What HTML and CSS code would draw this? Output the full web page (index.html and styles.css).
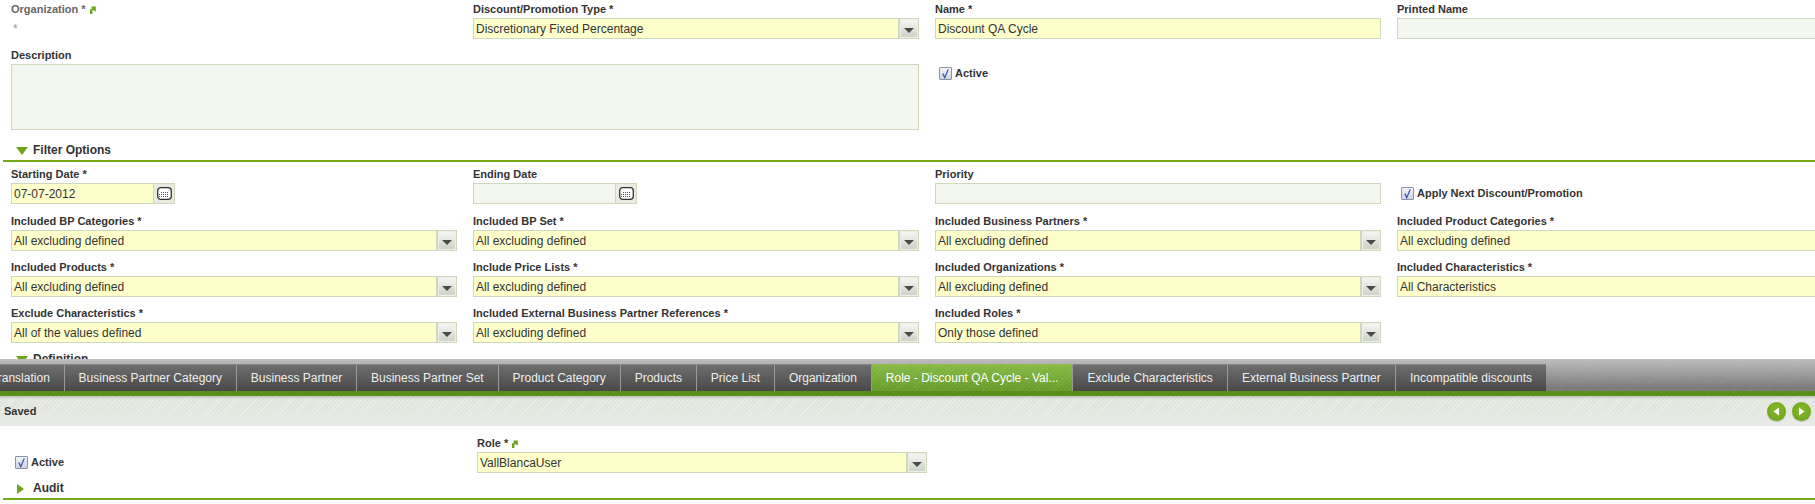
FILE: index.html
```html
<!DOCTYPE html>
<html lang="en">
<head>
<meta charset="utf-8">
<title>Discount/Promotion</title>
<link rel="stylesheet" href="styles.css">
</head>
<body>
<div class="page">
  <section class="form-top">
    <div class="grid row-first">
      <div class="field">
        <label class="lbl muted">Organization * <svg class="jump" viewBox="0 0 7 8"><path d="M1 8V4.200C1 3.400 1.600 3 2.400 3H3L2.200 .6H6.800V5.400L4.800 4.600V4.200H3.400V8Z"/></svg></label>
        <div class="readonly">*</div>
      </div>
      <div class="field">
        <label class="lbl">Discount/Promotion Type *</label>
        <div class="combo req"><span class="val">Discretionary Fixed Percentage</span><span class="drop"><i></i></span></div>
      </div>
      <div class="field">
        <label class="lbl">Name *</label>
        <div class="input req">Discount QA Cycle</div>
      </div>
      <div class="field">
        <label class="lbl">Printed Name</label>
        <div class="input opt"></div>
      </div>
    </div>
    <div class="grid row-desc">
      <div class="field span2">
        <label class="lbl">Description</label>
        <div class="textarea"></div>
      </div>
      <div class="check-cell">
        <span class="chk"><svg viewBox="0 0 12 12"><path d="M3 6 5.200 10.500 9 1.500"/></svg></span><span class="chk-lbl">Active</span>
      </div>
    </div>
    <header class="section"><i class="tri-down"></i><h2>Filter Options</h2></header>
    <div class="grid row-dates">
      <div class="field">
        <label class="lbl">Starting Date *</label>
        <div class="date"><div class="input req date-in">07-07-2012</div><span class="cal"><svg viewBox="0 0 15 13"><rect x=".7" y=".7" width="13.600" height="11.600" rx="3"/><path class="dots" d="M4 5.500H12M2 7.500H12M2 9.500H12"/></svg></span></div>
      </div>
      <div class="field">
        <label class="lbl">Ending Date</label>
        <div class="date"><div class="input opt date-in"></div><span class="cal"><svg viewBox="0 0 15 13"><rect x=".7" y=".7" width="13.600" height="11.600" rx="3"/><path class="dots" d="M4 5.500H12M2 7.500H12M2 9.500H12"/></svg></span></div>
      </div>
      <div class="field">
        <label class="lbl">Priority</label>
        <div class="input opt"></div>
      </div>
      <div class="check-cell apply">
        <span class="chk"><svg viewBox="0 0 12 12"><path d="M3 6 5.200 10.500 9 1.500"/></svg></span><span class="chk-lbl">Apply Next Discount/Promotion</span>
      </div>
    </div>
    <div class="grid row-combo">
      <div class="field"><label class="lbl">Included BP Categories *</label><div class="combo req"><span class="val">All excluding defined</span><span class="drop"><i></i></span></div></div>
      <div class="field"><label class="lbl">Included BP Set *</label><div class="combo req"><span class="val">All excluding defined</span><span class="drop"><i></i></span></div></div>
      <div class="field"><label class="lbl">Included Business Partners *</label><div class="combo req"><span class="val">All excluding defined</span><span class="drop"><i></i></span></div></div>
      <div class="field"><label class="lbl">Included Product Categories *</label><div class="combo req"><span class="val">All excluding defined</span><span class="drop"><i></i></span></div></div>
    </div>
    <div class="grid row-combo">
      <div class="field"><label class="lbl">Included Products *</label><div class="combo req"><span class="val">All excluding defined</span><span class="drop"><i></i></span></div></div>
      <div class="field"><label class="lbl">Include Price Lists *</label><div class="combo req"><span class="val">All excluding defined</span><span class="drop"><i></i></span></div></div>
      <div class="field"><label class="lbl">Included Organizations *</label><div class="combo req"><span class="val">All excluding defined</span><span class="drop"><i></i></span></div></div>
      <div class="field"><label class="lbl">Included Characteristics *</label><div class="combo req"><span class="val">All Characteristics</span><span class="drop"><i></i></span></div></div>
    </div>
    <div class="grid row-combo">
      <div class="field"><label class="lbl">Exclude Characteristics *</label><div class="combo req"><span class="val">All of the values defined</span><span class="drop"><i></i></span></div></div>
      <div class="field"><label class="lbl">Included External Business Partner References *</label><div class="combo req"><span class="val">All excluding defined</span><span class="drop"><i></i></span></div></div>
      <div class="field"><label class="lbl">Included Roles *</label><div class="combo req"><span class="val">Only those defined</span><span class="drop"><i></i></span></div></div>
    </div>
    <header class="section def"><i class="tri-down"></i><h2>Definition</h2></header>
  </section>

  <nav class="tabbar">
    <a class="tab first">Translation</a>
    <a class="tab">Business Partner Category</a>
    <a class="tab">Business Partner</a>
    <a class="tab">Business Partner Set</a>
    <a class="tab">Product Category</a>
    <a class="tab">Products</a>
    <a class="tab">Price List</a>
    <a class="tab">Organization</a>
    <a class="tab active">Role - Discount QA Cycle - Val...</a>
    <a class="tab">Exclude Characteristics</a>
    <a class="tab">External Business Partner</a>
    <a class="tab">Incompatible discounts</a>
  </nav>
  <div class="status">
    <strong>Saved</strong>
    <div class="pager">
      <span class="round"><svg viewBox="0 0 19 19"><path d="M12 5.500 6.500 9.500 12 13.500Z"/></svg></span>
      <span class="round"><svg viewBox="0 0 19 19"><path d="M7 5.500 12.500 9.500 7 13.500Z"/></svg></span>
    </div>
  </div>
  <section class="form-bottom">
    <div class="role-row">
      <div class="check-cell role-active">
        <span class="chk"><svg viewBox="0 0 12 12"><path d="M3 6 5.200 10.500 9 1.500"/></svg></span><span class="chk-lbl">Active</span>
      </div>
      <div class="field role-field">
        <label class="lbl">Role * <svg class="jump" viewBox="0 0 7 8"><path d="M1 8V4.200C1 3.400 1.600 3 2.400 3H3L2.200 .6H6.800V5.400L4.800 4.600V4.200H3.400V8Z"/></svg></label>
        <div class="combo req"><span class="val">VallBlancaUser</span><span class="drop"><i></i></span></div>
      </div>
    </div>
    <header class="section"><i class="tri-right"></i><h2>Audit</h2></header>
  </section>
</div>
</body>
</html>
```
FILE: styles.css
```css
* { box-sizing: border-box; }
html, body { margin: 0; padding: 0; background: #fff; }
body { font-family: "Liberation Sans", Arial, sans-serif; color: #333; overflow: hidden; }
.page { width: 1815px; height: 504px; overflow: hidden; }

.form-top { height: 359px; overflow: hidden; }
.grid { display: grid; grid-template-columns: repeat(4, 446px); column-gap: 16px; padding-left: 11px; width: 1900px; }
.field { display: flex; flex-direction: column; min-width: 0; }
.span2 { grid-column: span 2; }
.lbl { font-size: 11px; font-weight: 700; line-height: 13px; height: 17px; padding-top: 2px; color: #333; white-space: nowrap; }
.lbl.muted { color: #666; }
.jump { width: 7px; height: 8px; fill: #6fa51c; vertical-align: -1px; }

.row-first { height: 47px; padding-top: 1px; }
.readonly { font-size: 12px; color: #999; padding-left: 2px; padding-top: 1px; line-height: 21px; height: 21px; }
.input, .combo { height: 21px; border: 1px solid #cdd8bd; font-size: 12px; line-height: 20px; color: #333; }
.input { padding-left: 2px; }
.req { background: #ffffcc; }
.opt { background: #f4f7ef; }
.combo { display: flex; justify-content: space-between; }
.val { padding-left: 2px; white-space: nowrap; }
.drop { width: 20px; height: 19px; border-left: 2px solid #cdd8bd; box-shadow: inset 1px 1px 0 #eef0e8, inset -1px -1px 0 #eef0e8; background: linear-gradient(#f2f3ee 15%, #d2d5ca 85%); display: flex; align-items: center; justify-content: center; padding-top: 3px; }
.drop i { width: 0; height: 0; border-left: 5px solid transparent; border-right: 5px solid transparent; border-top: 5px solid #4a4a4a; }

.row-desc { height: 91px; }
.textarea { height: 66px; width: 908px; border: 1px solid #cdd8bd; background: #f4f7ef; }
.check-cell { display: flex; align-items: flex-start; }
.row-desc .check-cell { padding-top: 20px; padding-left: 4px; }
.chk { width: 13px; height: 13px; border: 1px solid #8c93a3; background: linear-gradient(#f2f3f7, #cfd4e0); border-radius: 1px; display: inline-block; flex: none; }
.chk svg { display: block; width: 11px; height: 11px; fill: none; stroke: #3a56b0; stroke-width: 1.4; }
.chk-lbl { font-size: 11px; font-weight: 700; line-height: 13px; margin-left: 3px; }

.section { display: flex; align-items: center; height: 24px; margin-left: 3px; border-bottom: 2px solid #74a816; }
.section h2 { margin: 0; padding-top: 1px; font-size: 12px; font-weight: 700; line-height: 22px; color: #333; }
.tri-down { width: 0; height: 0; margin-left: 13px; margin-right: 5px; margin-top: 3px; border-left: 6px solid transparent; border-right: 6px solid transparent; border-top: 8px solid #6fa51c; }
.tri-right { width: 0; height: 0; margin-left: 14px; margin-right: 9px; margin-top: 3px; border-top: 5px solid transparent; border-bottom: 5px solid transparent; border-left: 7px solid #6fa51c; }

.row-dates { height: 51px; padding-top: 4px; }
.date { display: flex; }
.date-in { width: 143px; flex: none; }
.cal { width: 21px; height: 21px; border: 1px solid #cdd8bd; border-left-width: 0; background: #e8ebe0; display: flex; align-items: center; justify-content: center; }
.cal svg { width: 15px; height: 13px; }
.cal rect { fill: #fff; stroke: #333; stroke-width: 1.300; }
.cal .dots { stroke: #555; stroke-width: 1; stroke-dasharray: 1 1; fill: none; }
.apply { padding-top: 21px; padding-left: 4px; }

.row-combo { height: 46px; }
.def { border-bottom: 0; margin-top: -5px; }

.tabbar { height: 37px; display: flex; padding-top: 5px; overflow: hidden; background: repeating-linear-gradient(135deg, rgba(255,255,255,.05) 0 1px, transparent 1px 3px), linear-gradient(#bdbdbd, #7a7a7a 90%); border-bottom: 5px solid #57901a; }
.tab { height: 27px; flex: none; padding: 0 13.900px; font-size: 12px; line-height: 27px; color: #eee; white-space: nowrap; background: linear-gradient(#6e6e6e, #484848); border-top: 1px solid #868686; border-right: 1px solid #999; }
.tab:last-child { border-right: 0; }
.tab.first { margin-left: -23px; }
.tab.active { padding: 0 14px; background: repeating-linear-gradient(135deg, rgba(255,255,255,.07) 0 1px, transparent 1px 3px), linear-gradient(#86b944, #649b28); border-top-color: #8fc04f; color: #fff; }
.tab.active ~ .tab { padding: 0 14.100px; }

.status { height: 30px; display: flex; align-items: center; justify-content: space-between; padding: 0 4px; background: linear-gradient(rgba(232,234,229,0) 40%, #e8eae5 85%), repeating-linear-gradient(135deg, #eceee9 0 1px, #e2e4de 1px 3px); box-shadow: inset 0 3px 2px -1px rgba(0,0,0,.14); }
.status strong { font-size: 11px; color: #333; }
.pager { display: flex; gap: 6px; }
.round { width: 19px; height: 19px; border-radius: 50%; background: radial-gradient(circle at 50% 40%, #86b92c, #6a9f16); box-shadow: 0 1px 1px rgba(0,0,0,.2); }
.round svg { display: block; width: 19px; height: 19px; fill: #fff; }

.role-row { display: flex; height: 50px; padding-top: 9px; padding-left: 15px; }
.role-active { width: 462px; padding-top: 21px; }
.role-field { width: 450px; }
```
